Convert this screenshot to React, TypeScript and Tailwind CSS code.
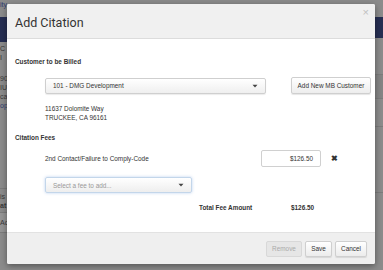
import React from "react";

const font = { fontFamily: '"Liberation Sans", Arial, sans-serif' };

function Caret() {
  return (
    <svg width="6" height="4" viewBox="0 0 6 4" className="shrink-0">
      <path d="M0.5 0.8 L5.5 0.8 L3 3.4 Z" fill="#444" />
    </svg>
  );
}

export default function App() {
  return (
    <div className="relative w-[383px] h-[270px] overflow-hidden bg-[#8b8b8b]" style={font}>
      {/* background page peeking */}
      <div className="absolute inset-0">
        <div className="absolute left-0 top-0 w-[7px] h-[270px] flex flex-col text-[7px] text-[#3a3a3a]">
          <div className="h-[17px] text-[#2c3a70] leading-[9px]">ity</div>
          <div className="h-[25px] bg-[#262e52]" />
          <div className="mt-[2px] leading-[9px] text-[#333]">C I</div>
          <div className="mt-[12px] leading-[9px]">90</div>
          <div className="leading-[9px]">IU</div>
          <div className="leading-[9px]">cat</div>
          <div className="leading-[9px] text-[#2c3a70]">op</div>
          <div className="h-[78px]" />
          <div className="leading-[9px] border-t border-[#7b7b7b] pt-[3px]">is</div>
          <div className="leading-[9px] font-bold">at</div>
          <div className="mt-[2px] border-t border-[#7b7b7b] bg-[#959595] h-[20px] leading-[20px]">Ac</div>
          <div className="border-t border-[#7b7b7b]" />
        </div>
        <div className="absolute right-0 top-0 w-[8px] h-[270px] flex flex-col">
          <div className="h-[17px]" />
          <div className="h-[21px] bg-[#262e52]" />
          <div className="h-[36px]" />
          <div className="h-[24px] bg-[#848484] border-t border-[#7b7b7b]" />
          <div className="h-[28px] border-t border-[#7b7b7b]" />
          <div className="h-[26px] border-t border-[#7b7b7b]" />
          <div className="h-[40px]" />
          <div className="border-t border-[#7b7b7b]" />
        </div>
      </div>

      {/* modal */}
      <div className="absolute left-[7px] top-[4px] w-[368px] h-[260px] bg-white rounded-[2px] shadow-[0_2px_6px_rgba(0,0,0,0.4)] flex flex-col overflow-hidden">
        <div className="h-[35px] shrink-0 bg-[#f0f0f0] border-b border-[#dcdcdc] flex items-center justify-between pl-[8px] pr-[6px] relative">
          <span className="text-[12.5px] text-[#333] leading-none mt-[4px]" style={{ fontFamily: 'Roboto, "Liberation Sans", sans-serif' }}>Add Citation</span>
          <span className="absolute right-[6px] top-[3px] text-[11px] text-[#c0c0c0] leading-none">×</span>
        </div>

        <div className="flex-1 flex flex-col text-[6.4px] text-[#333] leading-[9px]">
          <div className="pl-[8px] mt-[18px] font-bold">Customer to be Billed</div>
          <div className="flex items-center mt-[11px] pl-[38px]">
            <div className="w-[221px] h-[16px] border border-[#cfcfcf] rounded-[2px] bg-gradient-to-b from-white to-[#efefef] flex items-center justify-between px-[7px] shadow-[0_1px_1px_rgba(0,0,0,0.08)]">
              <span>101 - DMG Development</span>
              <Caret />
            </div>
            <div className="ml-[25px] w-[80px] h-[17px] border border-[#cfcfcf] rounded-[2px] bg-gradient-to-b from-white to-[#ededed] flex items-center justify-center shadow-[0_1px_1px_rgba(0,0,0,0.1)]">
              Add New MB Customer
            </div>
          </div>
          <div className="pl-[38px] mt-[10px]">11637 Dolomite Way</div>
          <div className="pl-[38px]">TRUCKEE, CA 96161</div>
          <div className="pl-[8px] mt-[11px] font-bold">Citation Fees</div>
          <div className="flex items-center mt-[8px] pl-[38px]">
            <span className="w-[216px]">2nd Contact/Failure to Comply-Code</span>
            <div className="w-[60px] h-[17px] border border-[#d0d0d0] rounded-[2px] bg-white flex items-center justify-end pr-[7px]">
              $126.50
            </div>
            <span className="ml-[10px] text-[8px] font-bold text-[#333] leading-none">✖</span>
          </div>
          <div className="pl-[38px] mt-[10px]">
            <div className="w-[147px] h-[16px] border border-[#c3d6ea] rounded-[2px] bg-gradient-to-b from-white to-[#eeeeee] flex items-center justify-between px-[7px] shadow-[0_0_3px_rgba(102,150,220,0.45)] text-[#999]">
              <span>Select a fee to add...</span>
              <Caret />
            </div>
          </div>
          <div className="flex mt-[10px] pl-[192px] font-bold">
            <span className="w-[92px]">Total Fee Amount</span>
            <span>$126.50</span>
          </div>
        </div>

        <div className="h-[32px] shrink-0 bg-[#efefef] border-t border-[#e2e2e2] flex items-center justify-end gap-[3px] pr-[8px] text-[6.4px]">
          <div className="w-[36px] h-[16px] rounded-[2px] border border-[#d8d8d8] bg-[#e6e6e6] text-[#aaa] flex items-center justify-center">Remove</div>
          <div className="w-[27px] h-[16px] rounded-[2px] border border-[#cfcfcf] bg-gradient-to-b from-white to-[#ececec] text-[#333] flex items-center justify-center shadow-[0_1px_1px_rgba(0,0,0,0.1)]">Save</div>
          <div className="w-[32px] h-[16px] rounded-[2px] border border-[#cfcfcf] bg-gradient-to-b from-white to-[#ececec] text-[#333] flex items-center justify-center shadow-[0_1px_1px_rgba(0,0,0,0.1)]">Cancel</div>
        </div>
      </div>
    </div>
  );
}
